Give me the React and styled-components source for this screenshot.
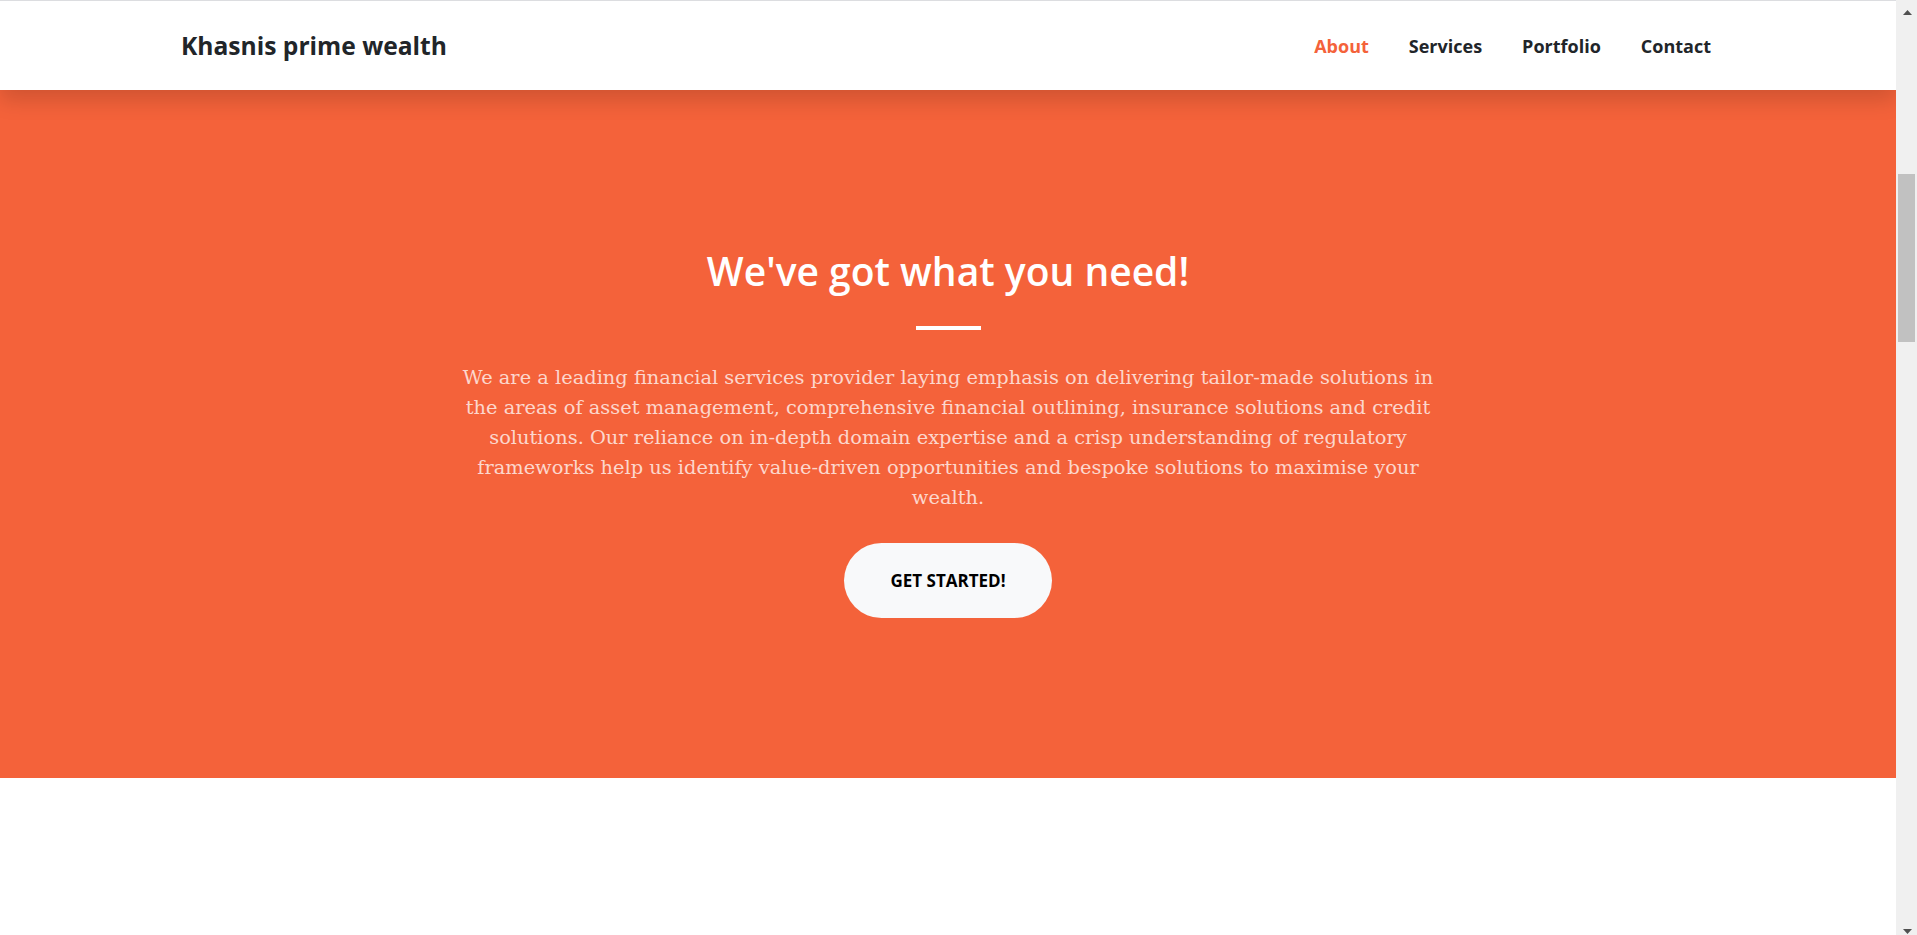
import React from "react";
import styled, { createGlobalStyle } from "styled-components";

const GlobalStyle = createGlobalStyle`
  * { box-sizing: border-box; }
  body {
    margin: 0;
    overflow: hidden;
    background: #fff;
    color: #212529;
    font-family: "DejaVu Serif", "Liberation Serif", serif;
  }
`;

const Frame = styled.div`
  display: flex;
  height: 100vh;
`;

const Page = styled.main`
  flex: 1;
  min-width: 0;
  overflow: hidden;
`;

/* browser scrollbar, drawn since the headless page hides its own */
const ScrollRail = styled.div`
  width: 21px;
  flex-shrink: 0;
  display: flex;
  flex-direction: column;
  background: #f0f0f0;
`;

const RailButton = styled.div`
  height: 21px;
  display: flex;
  justify-content: center;
  align-items: ${(p) => (p.$down ? "flex-end" : "flex-start")};
  padding: ${(p) => (p.$down ? "0 0 1px 1px" : "10px 0 0 1px")};

  svg { display: block; }
`;

const RailTrack = styled.div`
  flex: 1;
  padding: 153px 2px 0;
`;

const RailThumb = styled.div`
  height: 168px;
  background: #c1c1c1;
`;

const Navbar = styled.nav`
  position: relative;
  z-index: 2;
  height: 90px;
  display: flex;
  align-items: center;
  justify-content: space-between;
  padding: 0 165px 0 181px;
  background: #fff;
  border-top: 1px solid #dcdde0;
  box-shadow: 0 10px 20px rgba(0, 0, 0, 0.15);
`;

const Brand = styled.a`
  font-family: "Open Sans", Lato, sans-serif;
  font-weight: 700;
  font-size: 24.6px;
  color: #212529;
  text-decoration: none;
`;

const NavList = styled.ul`
  display: flex;
  list-style: none;
  margin: 0;
  padding: 0;
`;

const NavLink = styled.a`
  display: block;
  padding: 0 20px;
  font-family: "Open Sans", Lato, sans-serif;
  font-weight: 700;
  font-size: 18px;
  color: ${(p) => (p.$active ? "#f4623a" : "#212529")};
  text-decoration: none;
`;

const About = styled.section`
  background: #f4623a;
  padding: 157px 0 160px;
  display: flex;
  flex-direction: column;
  align-items: center;
  text-align: center;
`;

const Heading = styled.h2`
  margin: 0;
  font-family: "Open Sans", Lato, sans-serif;
  font-weight: 600;
  font-size: 39px;
  line-height: 48px;
  color: #fff;
`;

const Divider = styled.hr`
  width: 65px;
  height: 4px;
  margin: 31px auto 32.5px;
  border: 0;
  background: #fff;
  opacity: 1;
`;

const Lead = styled.p`
  width: 1000px;
  margin: 0 0 30px;
  font-size: 19.4px;
  line-height: 30px;
  color: rgba(255, 255, 255, 0.75);
`;

const StartButton = styled.a`
  display: inline-block;
  padding: 24px 46px;
  border-radius: 160px;
  background: #f8f9fa;
  color: #000;
  font-family: "Open Sans", Lato, sans-serif;
  font-weight: 700;
  font-size: 17px;
  line-height: 27px;
  text-transform: uppercase;
  text-decoration: none;
`;

const Services = styled.section`
  min-height: 4238px;
  background: #fff;
`;

const links = ["About", "Services", "Portfolio", "Contact"];

const Arrow = ({ down }) => (
  <svg width="9" height="5" viewBox="0 0 9 5">
    <polygon
      points={down ? "0,0 9,0 4.5,5" : "0,5 9,5 4.5,0"}
      fill="#505050"
    />
  </svg>
);

export default function App() {
  return (
    <Frame>
      <GlobalStyle />
      <Page>
        <Navbar>
          <Brand href="#top">Khasnis prime wealth</Brand>
          <NavList>
            {links.map((l) => (
              <li key={l}>
                <NavLink href={`#${l.toLowerCase()}`} $active={l === "About"}>
                  {l}
                </NavLink>
              </li>
            ))}
          </NavList>
        </Navbar>
        <About id="about">
          <Heading>We've got what you need!</Heading>
          <Divider />
          <Lead>
            We are a leading financial services provider laying emphasis on
            delivering tailor-made solutions in the areas of asset management,
            comprehensive financial outlining, insurance solutions and credit
            solutions. Our reliance on in-depth domain expertise and a crisp
            understanding of regulatory frameworks help us identify
            value-driven opportunities and bespoke solutions to maximise your
            wealth.
          </Lead>
          <StartButton href="#services">Get Started!</StartButton>
        </About>
        <Services id="services" />
      </Page>
      <ScrollRail>
        <RailButton>
          <Arrow />
        </RailButton>
        <RailTrack>
          <RailThumb />
        </RailTrack>
        <RailButton $down>
          <Arrow down />
        </RailButton>
      </ScrollRail>
    </Frame>
  );
}
